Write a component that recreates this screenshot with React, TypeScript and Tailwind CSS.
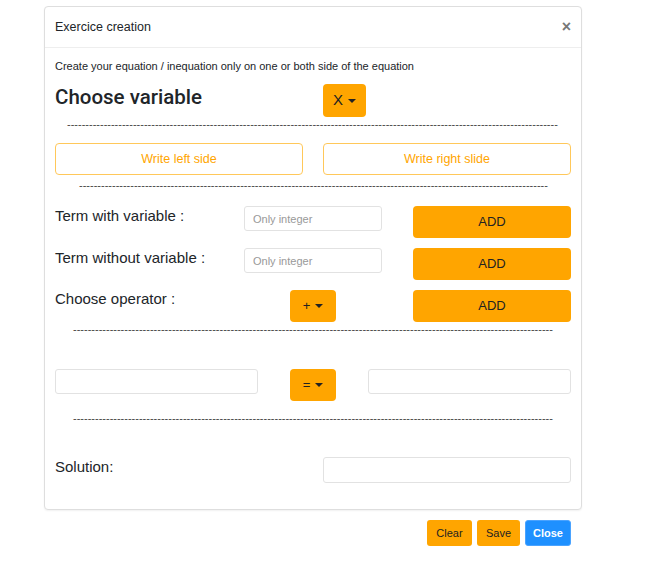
import React from "react";

// Row of hyphens used as a separator
const Dashes = ({ count, className }: { count: number; className: string }) => (
  <div className={`h-[12px] whitespace-nowrap text-[11px] leading-[12px] text-[#444] ${className}`}>
    {"-".repeat(count)}
  </div>
);

const Caret = () => (
  <span className="inline-block h-0 w-0 border-x-[4px] border-t-[4px] border-x-transparent border-t-[#222]" />
);

const Dropdown = ({ label, className }: { label: string; className: string }) => (
  <button
    className={`flex h-[32px] items-center justify-center gap-[5px] rounded-[4px] bg-[#ffa500] text-[#222] ${className}`}
  >
    {label}
    <Caret />
  </button>
);

const AddButton = () => (
  <button className="ml-auto h-[32px] w-[158px] rounded-[4px] bg-[#ffa500] text-[13px] text-[#222]">
    ADD
  </button>
);

const Input = ({ className, placeholder }: { className: string; placeholder?: string }) => (
  <input
    placeholder={placeholder}
    className={`rounded-[3px] border border-[#e2e2e2] bg-white px-[8px] text-[11px] text-[#333] outline-none placeholder:text-[#999] ${className}`}
  />
);

export default function App() {
  return (
    <div
      className="min-h-screen bg-white pl-[44px] pt-[6px] text-[#212529]"
      style={{ fontFamily: '"Liberation Sans", Arial, sans-serif' }}
    >
      <div className="w-[538px] rounded-[4px] border border-[#dedede] bg-white shadow-[0_1px_2px_rgba(0,0,0,0.06)]">
        {/* Header */}
        <div className="flex h-[41px] items-center justify-between border-b border-[#eeeeee] px-[10px]">
          <span className="text-[12.5px]">Exercice creation</span>
          <span className="text-[16px] font-bold leading-none text-[#777]">×</span>
        </div>

        {/* Body */}
        <div className="px-[10px] pb-[26px] pt-[11px]">
          <p className="text-[11px] leading-[14px]">
            Create your equation / inequation only on one or both side of the equation
          </p>

          <div className="mt-[11px] flex h-[33px] items-start">
            <h4
              className="mt-[1px] w-[268px] text-[20.5px] font-medium leading-[24px]"
              style={{ fontFamily: 'Roboto, "Liberation Sans", sans-serif' }}
            >
              Choose variable
            </h4>
            <Dropdown label="X" className="h-[33px] w-[43px] text-[15px]" />
          </div>

          <Dashes count={134} className="ml-[12px] mt-[1px]" />

          <div className="mt-[13px] flex gap-[20px]">
            <button className="h-[32px] w-[248px] rounded-[4px] border border-[#ffc85a] text-[12.5px] text-[#ffa500]">
              Write left side
            </button>
            <button className="h-[32px] w-[248px] rounded-[4px] border border-[#ffc85a] text-[12.5px] text-[#ffa500]">
              Write right slide
            </button>
          </div>

          <Dashes count={128} className="ml-[24px] mt-[4px]" />

          <div className="mt-[15px] flex flex-col gap-[10px]">
            <div className="flex items-start">
              <span className="w-[189px] text-[15px] leading-[20px]">Term with variable :</span>
              <Input className="h-[25px] w-[138px]" placeholder="Only integer" />
              <AddButton />
            </div>
            <div className="flex items-start">
              <span className="w-[189px] text-[15px] leading-[20px]">Term without variable :</span>
              <Input className="h-[25px] w-[138px]" placeholder="Only integer" />
              <AddButton />
            </div>
            <div className="flex items-start">
              <span className="-mt-[1px] w-[235px] text-[15px] leading-[20px]">Choose operator :</span>
              <Dropdown label="+" className="w-[46px] text-[13px]" />
              <AddButton />
            </div>
          </div>

          <Dashes count={131} className="ml-[18px] mt-[1px]" />

          <div className="mt-[34px] flex items-start">
            <Input className="h-[25px] w-[203px]" />
            <Dropdown label="=" className="ml-[32px] w-[46px] text-[13px]" />
            <Input className="ml-auto h-[25px] w-[203px]" />
          </div>

          <Dashes count={131} className="ml-[18px] mt-[11px]" />

          <div className="mt-[33px] flex items-start">
            <span className="text-[15px] leading-[20px]">Solution:</span>
            <Input className="ml-auto h-[26px] w-[248px]" />
          </div>
        </div>
      </div>

      {/* Footer buttons */}
      <div className="mt-[10px] flex w-[527px] justify-end gap-[5px]">
        <button className="h-[26px] w-[45px] rounded-[3px] bg-[#ffa500] text-[11px] text-[#222]">Clear</button>
        <button className="h-[26px] w-[43px] rounded-[3px] bg-[#ffa500] text-[11px] text-[#222]">Save</button>
        <button className="h-[26px] w-[46px] rounded-[3px] border border-[#4aa3ff] bg-[#1e90ff] text-[11px] font-bold text-white">
          Close
        </button>
      </div>
    </div>
  );
}
